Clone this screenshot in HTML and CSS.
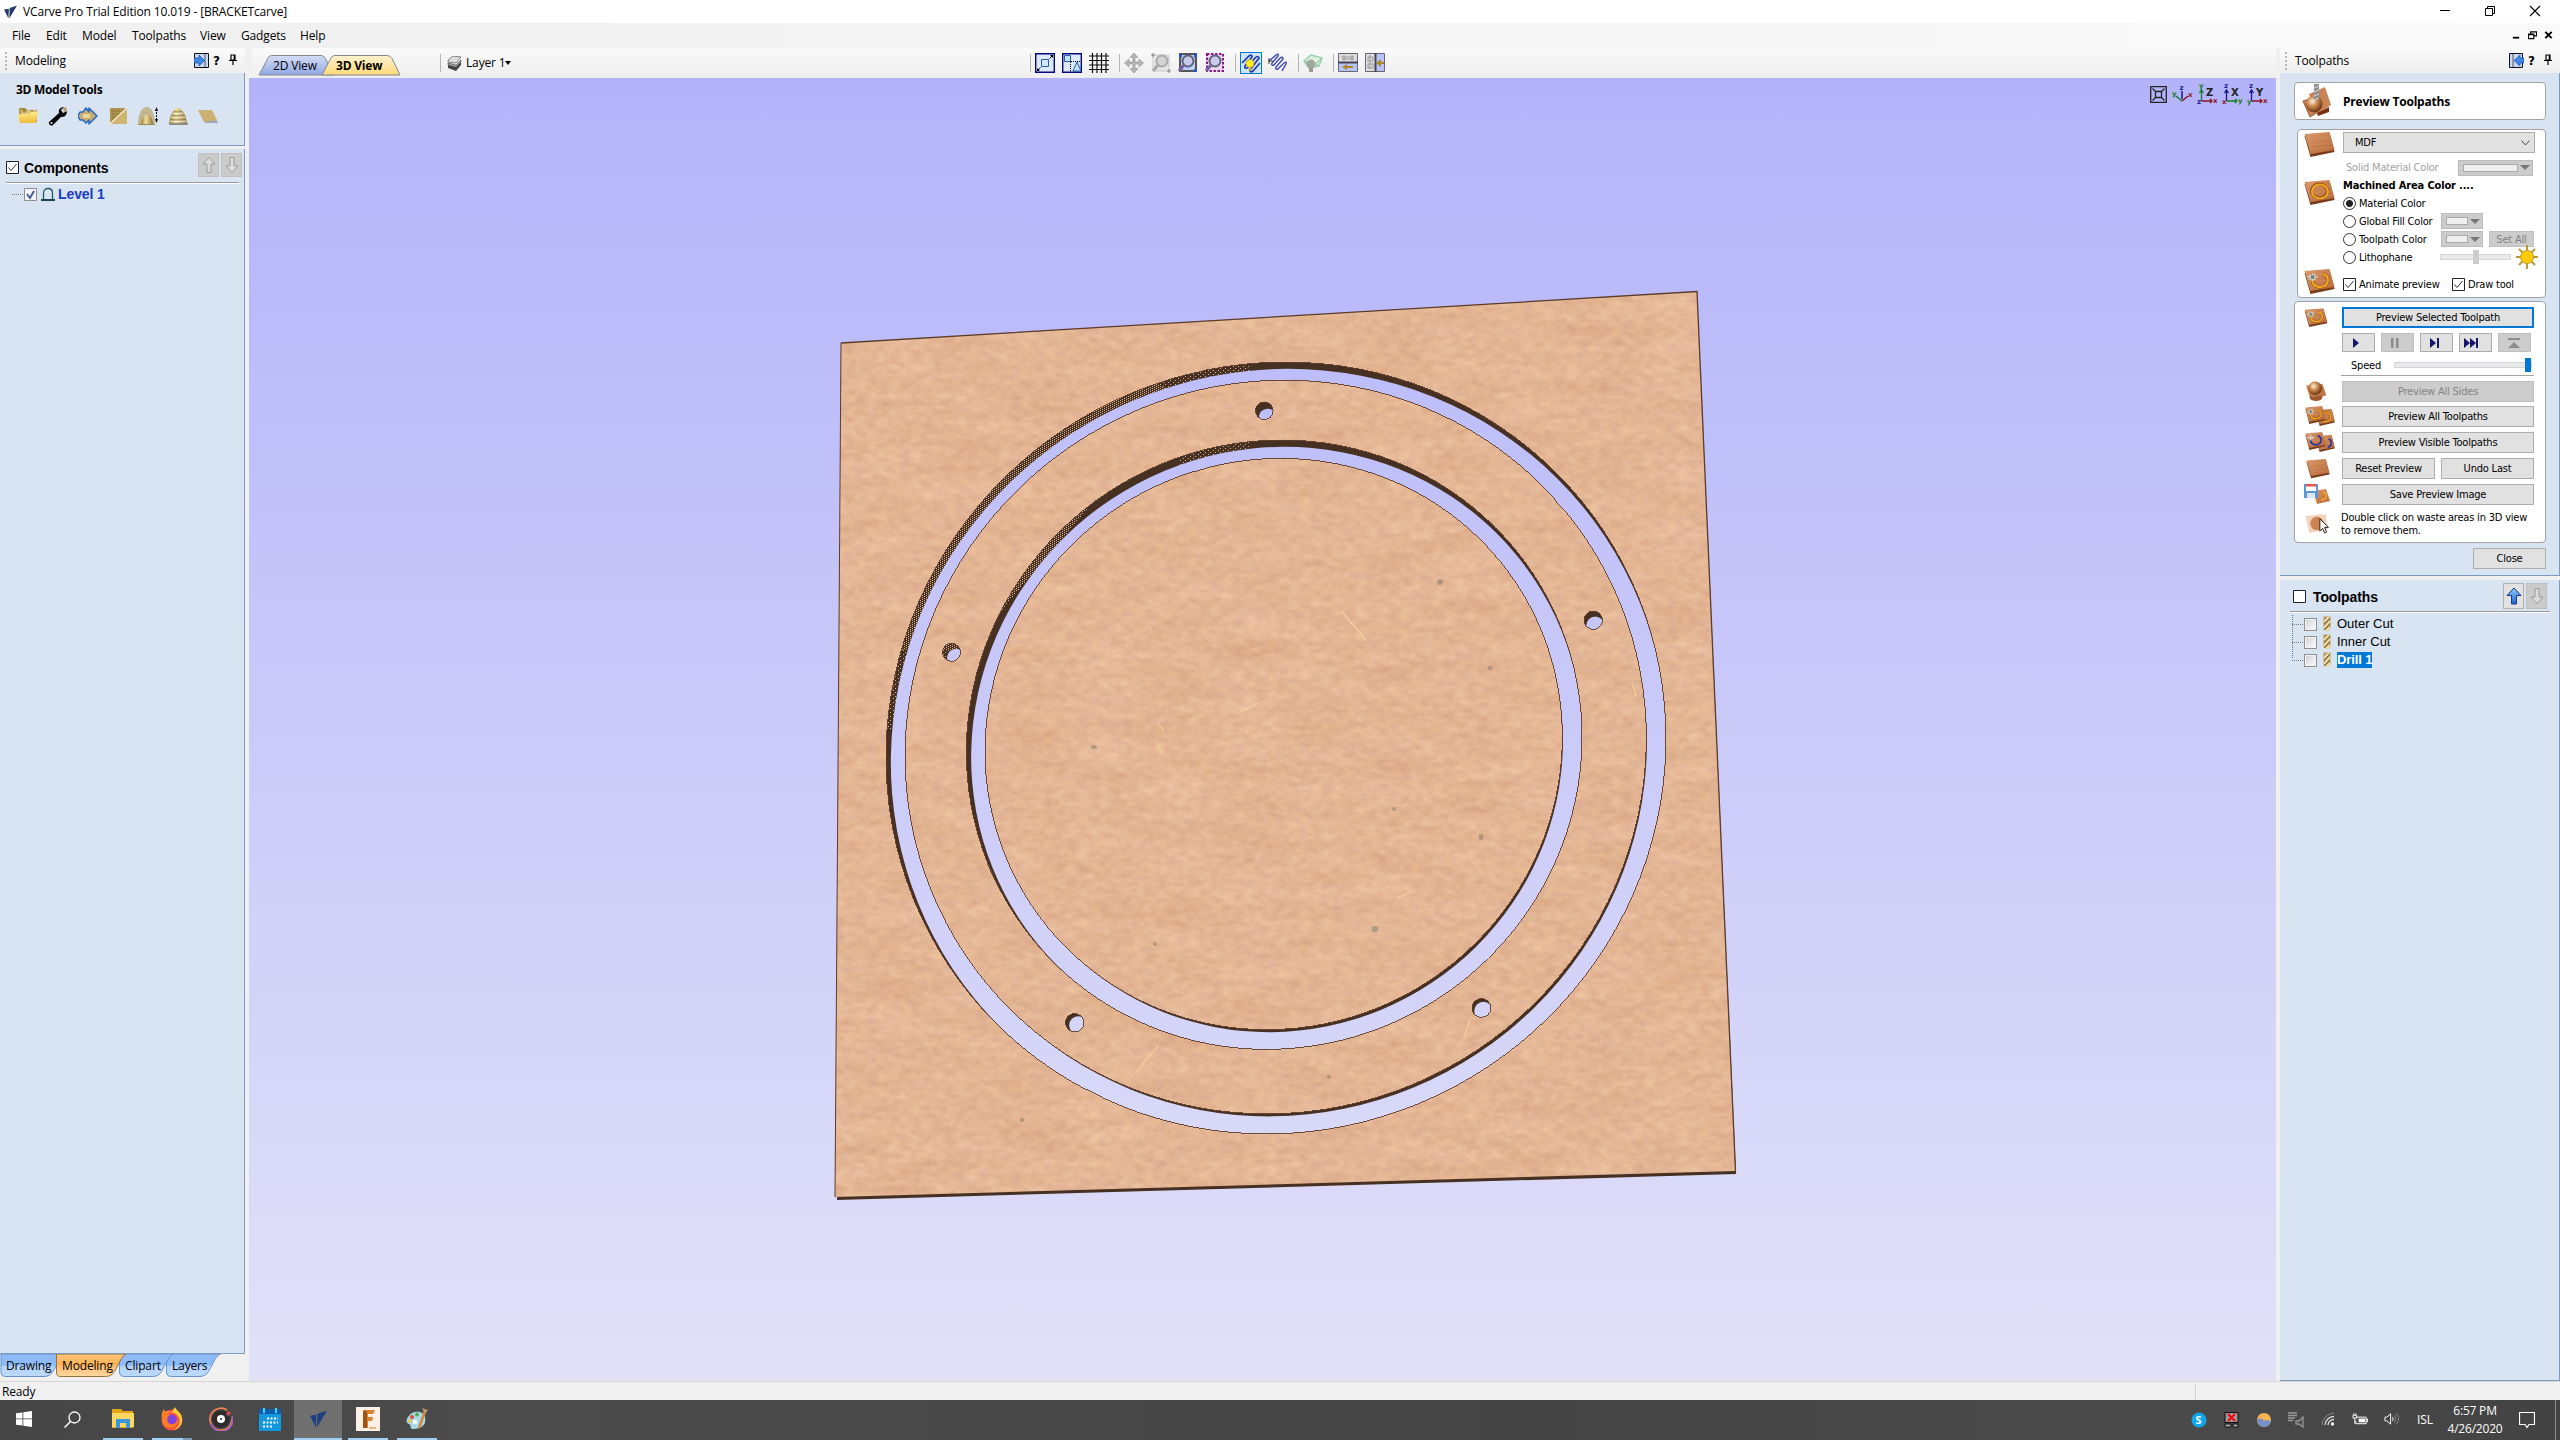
FILE: index.html
```html
<!DOCTYPE html>
<html lang="en">
<head>
<meta charset="utf-8">
<title>VCarve Pro Trial Edition 10.019 - [BRACKETcarve]</title>
<link rel="stylesheet" href="styles.css">
</head>
<body>
<svg class="defs" width="0" height="0">
  <defs>
    <linearGradient id="wood" x1="0" y1="0" x2="1" y2="1"><stop offset="0" stop-color="#dc9a6c"/><stop offset=".5" stop-color="#c8804f"/><stop offset="1" stop-color="#b5683a"/></linearGradient>
    <linearGradient id="brass" x1="0" y1="0" x2="1" y2="0"><stop offset="0" stop-color="#9a7d35"/><stop offset=".4" stop-color="#f0dfa0"/><stop offset="1" stop-color="#937632"/></linearGradient>
    <linearGradient id="folder" x1="0" y1="0" x2="0" y2="1"><stop offset="0" stop-color="#ffe88c"/><stop offset="1" stop-color="#ecbb35"/></linearGradient>
    <radialGradient id="ball" cx=".4" cy=".35" r=".65"><stop offset="0" stop-color="#fff2dc"/><stop offset=".45" stop-color="#cc8a50"/><stop offset="1" stop-color="#6c3413"/></radialGradient>
    <linearGradient id="blue" x1="0" y1="0" x2="0" y2="1"><stop offset="0" stop-color="#8cd1ff"/><stop offset="1" stop-color="#1d61d5"/></linearGradient>
    <symbol id="board" viewBox="0 0 32 26"><path d="M1 4 26 1 31 20 7 25z" fill="#7a3c18"/><path d="M1 2 26 0 31 18 7 22z" fill="url(#wood)"/><path d="M4 7 26 5M6 13 28 11M7 17 29 15" stroke="#e0a47b" stroke-width=".7" opacity=".4"/></symbol>
    <symbol id="ringboard" viewBox="0 0 32 26"><use href="#board" width="32" height="26"/><ellipse cx="16" cy="11" rx="8" ry="7" fill="none" stroke="#8f4d10" stroke-width="3"/><ellipse cx="16.4" cy="11.4" rx="8" ry="7" fill="none" stroke="#f5ac20" stroke-width="1.900"/></symbol>
    <symbol id="cutboard" viewBox="0 0 32 26"><use href="#board" width="32" height="26"/><path d="M19 5c8 2 7 12-2 13-6 0-9-4-8-8" fill="none" stroke="#8f4d10" stroke-width="3"/><path d="M19 5c8 2 7 12-2 13-6 0-9-4-8-8" fill="none" stroke="#f5ac20" stroke-width="2"/><path d="M4 8h10M9 4v8M6 6l6 5M12 5l-6 6" stroke="#cfd8d4" stroke-width="1.5"/><circle cx="9" cy="8" r="2" fill="#6d8480"/></symbol>
    <symbol id="pair" viewBox="0 0 32 22"><g transform="translate(11 3) scale(.66 .72)"><use href="#ringboard" width="32" height="26"/></g><g transform="scale(.7 .75)"><use href="#cutboard" width="32" height="26"/></g></symbol>
    <symbol id="bluepair" viewBox="0 0 32 22"><g transform="translate(11 3) scale(.66 .72)"><use href="#board" width="32" height="26"/></g><path d="M25 7c4 2 4 8-1 9" fill="none" stroke="#2a35a5" stroke-width="1.8"/><g transform="scale(.7 .75)"><use href="#board" width="32" height="26"/><path d="M19 5c8 2 7 12-2 13-6 0-9-4-8-8" fill="none" stroke="#2a35a5" stroke-width="2.6"/><path d="M4 8h10M9 4v8" stroke="#cfd8d4" stroke-width="2"/></g></symbol>
    <symbol id="upgray" viewBox="0 0 16 18"><path d="M8 1.5 14 8h-4v8.500H6V8H2z" fill="#dcdcdc" stroke="#9b9b9b"/></symbol>
    <symbol id="pin" viewBox="0 0 8 11"><path d="M2 1h4v5H2zM0 6.500h8M4 7v4M5.300 1v5" fill="none" stroke="#000" stroke-width="1.200"/></symbol>
    <symbol id="bit" viewBox="0 0 8 16"><path d="M.5.500h7v12l-3.500 3-3.500-3z" fill="#b6975a"/><path d="M1 6 6 1M1 12 7 5M3 15l4-4" stroke="#f2e2b0" stroke-width="1.800"/><path d="M1 8 7 2M1 14 7 8" stroke="#7a6129" stroke-width="1"/></symbol>
    <symbol id="vlogo" viewBox="0 0 16 16"><path d="M0 5 6 4 5.500 16zM7 3 16 0 6.500 16z" fill="currentColor"/></symbol>
  </defs>
</svg>

<header class="titlebar">
  <svg class="applogo" viewBox="0 0 16 16"><use href="#vlogo"/></svg>
  <span class="apptitle">VCarve Pro Trial Edition 10.019 - [BRACKETcarve]</span>
  <div class="wincontrols">
    <svg viewBox="0 0 12 12"><path d="M1 5.500h10" stroke="#000"/></svg>
    <svg viewBox="0 0 12 12"><path d="M1.500 3.500h7v7h-7zM3.500 3.500v-2h7v7h-2" fill="none" stroke="#000"/></svg>
    <svg viewBox="0 0 12 12"><path d="M1 1l10 10M11 1 1 11" stroke="#000" stroke-width="1.100"/></svg>
  </div>
</header>

<nav class="menubar">
  <span class="m-file">File</span><span class="m-edit">Edit</span><span class="m-model">Model</span><span class="m-tool">Toolpaths</span><span class="m-view">View</span><span class="m-gadg">Gadgets</span><span>Help</span>
  <div class="mdicontrols">
    <svg viewBox="0 0 10 10"><path d="M1 8h7" stroke="#000" stroke-width="2"/></svg>
    <svg viewBox="0 0 10 10"><path d="M.5 4h6v5h-6zM3 4V1.500h6.500V6H7M3 1.500h6.500M.5 4.500h6" fill="none" stroke="#000" stroke-width="1.300"/></svg>
    <svg viewBox="0 0 10 10"><path d="M1.500 1.500l7 7M8.500 1.500l-7 7" stroke="#000" stroke-width="2.200"/></svg>
  </div>
</nav>

<main class="workspace">
  <aside class="leftdock">
    <div class="dockhead"><i class="grip"></i><span>Modeling</span>
      <svg class="dockarrow" viewBox="0 0 15 15"><path d="M.5.5h14v14H.5z" fill="#c9d9f5" stroke="#111"/><path d="M11 1v13" stroke="#555"/><path d="M0 5h5V2l5.500 5.500L5 13v-3H0z" fill="#3e86ea" stroke="#174c9b" stroke-width=".7"/></svg>
      <b class="help">?</b><svg class="pin"><use href="#pin"/></svg></div>
    <section class="toolspanel">
      <h2>3D Model Tools</h2>
      <div class="toolicons">
        <svg viewBox="0 0 20 20"><path d="M1 2h6l2 2h10v12H2z" fill="#a88532"/><path d="M2 2l4 5 5-4 3 3 5-4-1 9H4z" fill="#d8c489"/><path d="M0 8h11l2-2h7l-2 11H2z" fill="url(#folder)"/></svg>
        <svg viewBox="0 0 20 20"><path d="M1 16 11 7c-1-4 2-6 5-6l-3 3 2 3 4-2c0 5-3 6-6 6L5 19c-2 2-5-1-4-3z" fill="#0c0c0c"/><path d="M15 2l3-1 1 3-3 2z" fill="#b59a66"/><circle cx="3.500" cy="17" r="1" fill="#eee"/></svg>
        <svg viewBox="0 0 20 20"><path d="M2 6h3l3-4 3 4V2l8 8-8 8v-4l-3 3-3-3H2L0 10z" fill="#c9ac69" stroke="#2869cc" stroke-width="1.600" stroke-linejoin="round"/><path d="M5 8h7v4H5z" fill="#ead79d"/></svg>
        <svg viewBox="0 0 20 20"><path d="M2 2h17v16H2z" fill="#b79b58"/><path d="M2 5h17M2 8h17M2 11h17M2 14h17M5 2v16M8 2v16M11 2v16M14 2v16" stroke="#8c7235" stroke-width=".7"/><path d="M3 18 19 3v15z" fill="#cdb471"/><path d="M2 18 19 2" stroke="#f8efd0" stroke-width="1.500"/></svg>
        <svg viewBox="0 0 20 20"><path d="M0 19C0 5 5 1 8.500 1s8.500 4 8.500 18z" fill="#c2b791"/><path d="M3 19c0-8 3-10 6-10s6 3 6 10z" fill="url(#brass)"/><path d="M0 18.500h17" stroke="#998a5c"/><path d="M18.500 3v12" stroke="#111" stroke-dasharray="2 1"/><path d="M17 5l1.500-4L20 5zM17 13l1.500 4 1.500-4z"/></svg>
        <svg viewBox="0 0 20 20"><path d="M1 18C2 6 7 2 10 2s8 5 9 16z" fill="url(#brass)"/><path d="M5 6h10M3 10h14M2 14h16" stroke="#81784f" stroke-width="1.200"/><path d="M5 7.200h10M3 11.200h14M2 15.200h16" stroke="#f5efd8"/><path d="M1 18h19" stroke="#8f8e84" stroke-width="2"/></svg>
        <svg viewBox="0 0 20 20"><path d="M1 6h13l6 11H7z" fill="#9fa7ad"/><path d="M0 4h14l5 10-13 2z" fill="#cbb274"/></svg>
      </div>
    </section>
    <section class="treepanel">
      <div class="treehead"><svg class="check" viewBox="0 0 13 13"><path d="M.5.5h12v12H.5z" fill="#fff" stroke="#222"/><path d="M2.500 6.500 5 9.500 10.500 3" fill="none" stroke="#333"/></svg><h3>Components</h3>
        <span class="arrowbtn off"><svg><use href="#upgray"/></svg></span><span class="arrowbtn off down"><svg><use href="#upgray"/></svg></span></div>
      <div class="treeline"><i class="stub"></i><svg class="check" viewBox="0 0 13 13"><path d="M.5.5h12v12H.5z" fill="#f4f4f4" stroke="#8e8f8f"/><path d="M3 6l3 4 4-7" fill="none" stroke="#4a5f97" stroke-width="2"/></svg>
        <svg class="levelicon" viewBox="0 0 14 14"><path d="M2.500 12V6c0-6 9-6 9 0v6" fill="none" stroke="#235765" stroke-width="1.300"/><path d="M0 13h14" stroke="#174350" stroke-width="2"/></svg><b>Level 1</b></div>
    </section>
    <div class="docktabs">
      <svg viewBox="0 0 222 24" width="222" height="24">
        <defs><linearGradient id="tb" x1="0" y1="0" x2="0" y2="1"><stop offset="0" stop-color="#8fbcf8"/><stop offset=".5" stop-color="#8abaf8"/><stop offset=".55" stop-color="#b4d3fb"/><stop offset="1" stop-color="#bcdafd"/></linearGradient>
        <linearGradient id="to" x1="0" y1="0" x2="0" y2="1"><stop offset="0" stop-color="#fbc57c"/><stop offset=".45" stop-color="#fdb255"/><stop offset=".55" stop-color="#fdbd73"/><stop offset="1" stop-color="#ffd9a0"/></linearGradient></defs>
        <g stroke="#6792cc"><path d="M166.500 0v18q0 4.500 5 4.500h28q6 0 9-5l7-13q2-4 5-4.500z" fill="url(#tb)"/><path d="M119.500 0v18q0 4.500 5 4.500h28q6 0 9-5l7-13q2-4 5-4.500z" fill="url(#tb)"/><path d="M1 0v18q0 4.500 5 4.500h38q6 0 9-5l7-13V0z" fill="url(#tb)"/></g>
        <path d="M56.500 0v18q0 4.500 4 4.500h45q6 0 9-5l7-13q2-4 5-4.500z" fill="url(#to)" stroke="#96723c"/>
      </svg>
      <div class="tablabels"><span>Drawing</span><span>Modeling</span><span>Clipart</span><span>Layers</span></div>
    </div>
  </aside>

  <section class="center">
    <div class="toolbar">
      <div class="viewtabs">
        <svg viewBox="0 0 144 21" width="144" height="21"><defs><linearGradient id="t2" x1="0" y1="0" x2="0" y2="1"><stop offset="0" stop-color="#d5ddf6"/><stop offset="1" stop-color="#8fa8e4"/></linearGradient><linearGradient id="t3" x1="0" y1="0" x2="0" y2="1"><stop offset="0" stop-color="#fff3d1"/><stop offset="1" stop-color="#fdd877"/></linearGradient></defs>
        <path d="M1 20 10 3q1-2.500 4-2.500h49q3 0 4 2.500l9 17z" fill="url(#t2)" stroke="#85888d"/><path d="M64 20 73 3q1-2.500 4-2.500h52q3 0 5 3l8 16.500z" fill="url(#t3)" stroke="#85888d"/></svg>
        <div class="viewlabels"><span>2D View</span><b>3D View</b></div>
      </div>
      <i class="sep s0"></i>
      <svg class="layericon" viewBox="0 0 15 15"><path d="M1 9 9 11l5-5v3l-5 6-8-3z" fill="#444"/><path d="M1 7 9 9l5-5v2l-5 5-8-2z" fill="#aaa" stroke="#333" stroke-width=".6"/><path d="M1 4 6 0l8 1-5 6-8-1z" fill="#ddd" stroke="#555" stroke-width=".7"/></svg>
      <span class="layername">Layer 1</span><i class="caret"></i>
      <div class="viewtools">
        <i class="sep"></i>
        <svg viewBox="0 0 20 20"><path d="M.7.700h18.600v18.600H.7z" fill="#dde9f7" stroke="#06067d" stroke-width="1.400"/><path d="M6.500 6.500h7v7h-7z" fill="#d3e9fb" stroke="#2060a8"/><path d="M2 18l3.500-3.500M14.500 5.500 18 2" stroke="#000"/><path d="M2 15v3h3zM15 2h3v3z"/></svg>
        <svg viewBox="0 0 20 20"><path d="M.7.700h18.600v18.600H.7z" fill="#dde9f7" stroke="#06067d" stroke-width="1.400"/><path d="M2.500 2.500h6v6h-6z" fill="#c4e4fb" stroke="#2060a8"/><path d="M11 18l4-9 4 9z" fill="#c4e4fb" stroke="#2060a8"/><path d="M8.500 18V8.500H19" fill="none" stroke="#000" stroke-dasharray="1 1"/></svg>
        <svg viewBox="0 0 20 20"><path d="M3.500 0v20M8 0v20M12.500 0v20M17 0v20M0 3h20M0 7.500h20M0 12h20M0 16.500h20" stroke="#111" stroke-width="1.200"/></svg>
        <i class="sep"></i>
        <svg viewBox="0 0 20 20"><path d="M10 0l4 4.500h-3V9h4V6l4.500 4-4.500 4v-3h-4v4.500h3L10 20l-4-4.500h3V11H5v3L.5 10 5 6v3h4V4.500H6z" fill="#b5b5b5" stroke="#999" stroke-width=".7"/></svg>
        <svg viewBox="0 0 20 20"><path d="M2 2h16v16H2z" fill="#e5e5e5" stroke="#ccc"/><circle cx="11" cy="8" r="5.500" fill="#d4d4d4" stroke="#aaa" stroke-width="2"/><path d="M7 12l-5 6" stroke="#aaa" stroke-width="3"/><path d="M0 2h4M2 0v4M16 18h4M18 16v4" stroke="#888"/></svg>
        <svg viewBox="0 0 20 20"><path d="M2 1h16v17H2z" fill="#b8d0fb" stroke="#555" stroke-width="2"/><circle cx="10" cy="8" r="5.500" fill="#c9caec" stroke="#62627c" stroke-width="2"/><path d="M6 12l-5 6" stroke="#7860a3" stroke-width="3"/><path d="M1 1h3v3H1zM16 1h3v3h-3zM16 16h3v3h-3z" fill="#2457c7"/></svg>
        <svg viewBox="0 0 20 20"><path d="M2 1h16v17H2z" fill="#ead9ed" stroke="#8b1689" stroke-width="2" stroke-dasharray="2.500 1.500"/><circle cx="10" cy="8" r="5.500" fill="#c9caec" stroke="#62627c" stroke-width="2"/><path d="M6 12l-5 6" stroke="#7860a3" stroke-width="3"/></svg>
        <i class="sep"></i>
        <svg class="active" viewBox="0 0 20 20"><path d="M1 10 8 3q3-2 3 1L4 13q-1 3 2 2L14 5q3-3 4 0L9 17q0 3 3 1l7-8" fill="none" stroke="#2438ba" stroke-width="1.700"/><circle cx="9" cy="10.500" r="4" fill="#ffed22" stroke="#a89d33" stroke-width=".8"/><path d="M7.500 14.500h3v3h-3z" fill="#c7af3a"/></svg>
        <svg viewBox="0 0 20 20"><path d="M1 8 8 2q3-2 2 1L4 10q-1 3 2 2l6-7q3-2 3 1L8 14q-1 3 2 2l6-6q3-2 2 1l-4 7" fill="none" stroke="#3644b5" stroke-width="1.400"/><path d="M0 8h5M1 5v6" stroke="#444"/></svg>
        <i class="sep"></i>
        <svg viewBox="0 0 20 20"><path d="M1 8 8 2l11 3-3 8-10 2zM1 8l11 3 7-6M12 11l4 2" fill="#d9eee0" stroke="#9bd0aa" stroke-width="1.500"/><circle cx="8" cy="11" r="4.500" fill="#a3aa9c"/><path d="M6 14h4v5H6z" fill="#9b9b8e"/></svg>
        <i class="sep"></i>
        <svg viewBox="0 0 20 20"><path d="M.5.500h19v18H.5z" fill="#ddd" stroke="#667"/><path d="M1 10h18v8H1z" fill="#b5c5fa"/><path d="M0 9.500h20" stroke="#445" stroke-width="2"/><path d="M3 4h13M4 6h12M6 2v6M14 2v6" stroke="#999"/><path d="M4 14l5-3v2h6v2H9v2z" fill="#b38523"/></svg>
        <svg viewBox="0 0 20 20"><path d="M.5.500h19v18H.5z" fill="#ddd" stroke="#667"/><path d="M11 1h8v17h-8z" fill="#b5c5fa"/><path d="M10.500 0v19" stroke="#445" stroke-width="2"/><path d="M3 4h5v4H3zM3 11h5v4H3zM5 2v14" fill="none" stroke="#999"/><path d="M11 10l5-4v3h3v2h-3v3z" fill="#b38523"/></svg>
      </div>
    </div>
    <div class="viewport">
      <svg class="scene" viewBox="249 78 2027 1303" width="2027" height="1303">
        <defs>
          <filter id="mdf" x="0" y="0" width="1" height="1" color-interpolation-filters="sRGB">
            <feTurbulence type="fractalNoise" baseFrequency="0.014 0.05" numOctaves="2" seed="8" result="a"/>
            <feColorMatrix in="a" type="matrix" values=".04 .03 0 0 .856  .06 .05 0 0 .656  .05 .08 0 0 .517  0 0 0 0 1" result="base"/>
            <feTurbulence type="fractalNoise" baseFrequency="0.09 0.15" numOctaves="3" seed="21" result="b"/>
            <feColorMatrix in="b" type="matrix" values=".09 0 0 0 .455  .12 .03 0 0 .425  .08 .07 0 0 .425  0 0 0 0 1" result="fine"/>
            <feComposite in="base" in2="fine" operator="arithmetic" k1="0" k2="1" k3="1" k4="-.5"/>
          </filter>
          <pattern id="stipple" width="4" height="4" patternUnits="userSpaceOnUse"><path d="M0 0h1v1H0zM2 1h1v1H2zM0 2h1v1H0zM2 3h1v1H2z" fill="#d9b08e"/></pattern>
          <pattern id="stipplethin" width="5" height="4" patternUnits="userSpaceOnUse"><path d="M0 0h1v1H0zM3 2h1v1H3z" fill="#d9b08e"/></pattern>
          <mask id="topface" maskUnits="userSpaceOnUse" x="820" y="280" width="930" height="930">
            <path d="M841 343 1697 291.500 1735.500 1171 835 1197z" fill="#fff"/>
            <ellipse rx="393.100" ry="382.800" transform="translate(1276 748) rotate(-33.500)" fill="#000"/>
            <ellipse rx="373.600" ry="363.900" transform="translate(1275.700 747) rotate(-33.500)" fill="#fff"/>
            <ellipse rx="310.300" ry="302.200" transform="translate(1274.200 744.700) rotate(-33.500)" fill="#000"/>
            <ellipse rx="291" ry="283.300" transform="translate(1273.700 744) rotate(-33.500)" fill="#fff"/>
            <g fill="#000"><circle cx="1264.300" cy="410.800" r="9"/><circle cx="951.500" cy="652.300" r="9.200"/><circle cx="1593.300" cy="620.300" r="9.300"/><circle cx="1074.700" cy="1022.700" r="9.300"/><circle cx="1481.400" cy="1008" r="9.600"/></g>
          </mask>
          <mask id="lowface" maskUnits="userSpaceOnUse" x="820" y="280" width="930" height="930">
            <path d="M841 343 1697 291.500 1736 1174 837 1200z" fill="#fff"/>
            <ellipse rx="391.300" ry="381" transform="translate(1279 753) rotate(-33.500)" fill="#000"/>
            <ellipse rx="371.800" ry="362.100" transform="translate(1278 751.300) rotate(-33.500)" fill="#fff"/>
            <ellipse rx="308.500" ry="300.400" transform="translate(1277.200 749.700) rotate(-33.500)" fill="#000"/>
            <ellipse rx="289.200" ry="281.500" transform="translate(1276 748.300) rotate(-33.500)" fill="#fff"/>
            <g fill="#000"><circle cx="1267.600" cy="417.500" r="8.800"/><circle cx="956" cy="657.800" r="9"/><circle cx="1595.300" cy="625.500" r="9"/><circle cx="1078.200" cy="1025.200" r="9"/><circle cx="1483.400" cy="1011" r="9.200"/></g>
          </mask>
        </defs>
        <g mask="url(#lowface)" shape-rendering="crispEdges">
          <path d="M820 280h930v930H820z" fill="#453022"/>
          <path d="M880 650 920 560 1060 400 1140 370 1180 400 1010 600 975 650z" fill="url(#stipple)"/>
          <path d="M1140 350h110v130h-70V400l-40-30zM880 650h95l-20 80h-75z" fill="url(#stipplethin)"/>
        </g>
        <g mask="url(#topface)">
          <rect x="820" y="280" width="930" height="930" fill="#e2b493" filter="url(#mdf)"/>
          <g fill="#8b7f6c" opacity=".55"><ellipse cx="1440" cy="582" rx="3" ry="3"/><ellipse cx="1375" cy="929" rx="3.500" ry="3"/><ellipse cx="1490" cy="668" rx="2.500" ry="2"/><ellipse cx="1481" cy="837" rx="2.500" ry="3"/><ellipse cx="1094" cy="747" rx="3" ry="2"/><ellipse cx="1394" cy="809" rx="2" ry="2"/><ellipse cx="1155" cy="944" rx="2" ry="2"/><ellipse cx="1022" cy="1120" rx="2" ry="2"/><ellipse cx="1329" cy="1077" rx="2" ry="2"/></g>
          <g fill="none" stroke="#f4cf9f" stroke-width="2" opacity=".7" stroke-linecap="round"><path d="M1342 612 1366 640M1158 1046 1136 1072M1632 683l4 12M1398 898l14-7M1470 1020l-6 18M1157 722l6 8M1157 744l5 9M1240 712l18-9"/></g>
        </g>
        <g fill="none" stroke="#5d3c29">
          <path d="M841 343 1697 291.500 1735.500 1171" stroke-width="1.300"/><path d="M841 343 835 1197" stroke-width="1"/>
          <g stroke-width=".9" shape-rendering="crispEdges">
          <ellipse rx="393.100" ry="382.800" transform="translate(1276 748) rotate(-33.500)"/>
          <ellipse rx="373.600" ry="363.900" transform="translate(1275.700 747) rotate(-33.500)"/>
          <ellipse rx="310.300" ry="302.200" transform="translate(1274.200 744.700) rotate(-33.500)"/>
          <ellipse rx="291" ry="283.300" transform="translate(1273.700 744) rotate(-33.500)"/>
          <circle cx="1264.300" cy="410.800" r="8.800"/><circle cx="951.500" cy="652.300" r="9"/><circle cx="1593.300" cy="620.300" r="9.200"/><circle cx="1074.700" cy="1022.700" r="9.200"/><circle cx="1481.400" cy="1008" r="9.400"/></g>
        </g>
      </svg>
      <div class="axes">
        <svg viewBox="0 0 17 17" width="17" height="17"><path d="M.7.700h15.600v15.600H.7zM5.500 5.500h6v6h-6zM2.500 2.500l3 3M14.500 2.500l-3 3M2.500 14.500l3-3M14.500 14.500l-3-3" fill="none" stroke="#222" stroke-width="1.300"/></svg>
        <svg viewBox="0 0 20 20" width="20" height="20"><path d="M10 15V7" stroke="#16168c" stroke-width="1.500"/><path d="M10 17 4 12" stroke="#187b26" stroke-width="1.500"/><path d="M10 17l6-5" stroke="#8c1620" stroke-width="1.500"/><text x="7.500" y="6" fill="#16168c">z</text><text x="0" y="12" fill="#187b26">y</text><text x="16" y="13" fill="#8c1620">x</text></svg>
        <svg viewBox="0 0 20 20" width="20" height="20"><path d="M4.500 17V6M2.500 9l2-3 2 3" fill="none" stroke="#187b26" stroke-width="1.300"/><path d="M4.500 17H15M13 15l2 2-2 2" fill="none" stroke="#8c1620" stroke-width="1.300"/><text x="2" y="4" fill="#187b26">y</text><text x="0" y="20" fill="#16168c">z</text><text x="16" y="19" fill="#8c1620">x</text><text class="big" x="9" y="12">Z</text></svg>
        <svg viewBox="0 0 20 20" width="20" height="20"><path d="M4.500 17V6M2.500 9l2-3 2 3" fill="none" stroke="#16168c" stroke-width="1.300"/><path d="M4.500 17H15M13 15l2 2-2 2" fill="none" stroke="#187b26" stroke-width="1.300"/><text x="2" y="4" fill="#16168c">z</text><text x="0" y="20" fill="#8c1620">x</text><text x="16" y="19" fill="#187b26">y</text><text class="big" x="9" y="12">X</text></svg>
        <svg viewBox="0 0 20 20" width="20" height="20"><path d="M4.500 17V6M2.500 9l2-3 2 3" fill="none" stroke="#16168c" stroke-width="1.300"/><path d="M4.500 17H15M13 15l2 2-2 2" fill="none" stroke="#8c1620" stroke-width="1.300"/><text x="2" y="4" fill="#16168c">z</text><text x="0" y="20" fill="#187b26">y</text><text x="16" y="19" fill="#8c1620">x</text><text class="big" x="9" y="12">Y</text></svg>
      </div>
    </div>
  </section>

  <aside class="rightdock">
    <div class="dockhead"><i class="grip"></i><span>Toolpaths</span>
      <svg class="dockarrow" viewBox="0 0 15 15"><path d="M.5.500h13v14H.5z" fill="#c9d9f5" stroke="#111"/><path d="M4 1v13" stroke="#555"/><path d="M15 5h-4V2L5 7.500 11 13v-3h4z" fill="#3e86ea" stroke="#174c9b" stroke-width=".7"/></svg>
      <b class="help">?</b><svg class="pin"><use href="#pin"/></svg></div>
    <section class="previewpanel">
      <div class="group heading">
        <svg viewBox="0 0 30 34" width="30" height="34"><path d="M8 10 24 3l6 18-14 9z" fill="#c98455"/><path d="M16 29l12-6v5l-11 4z" fill="#7b3214"/><path d="M2 17l10-3 5 14-8 5z" fill="#c98455" stroke="#a05a2e"/><circle cx="13" cy="20" r="8.500" fill="url(#ball)"/><path d="M13 0h5v16h-5z" fill="#8d9093"/><path d="M13 4l5-2M13 8l5-2M13 12l5-2M13 16l5-2" stroke="#dadada"/></svg>
        <b>Preview Toolpaths</b>
      </div>
      <div class="group material">
        <div class="iconcol">
          <svg class="w i1"><use href="#board"/></svg><svg class="w i2"><use href="#ringboard"/></svg><svg class="w i3"><use href="#cutboard"/></svg>
        </div>
        <div class="fields">
          <div class="select"><span>MDF</span><svg viewBox="0 0 9 6" width="9" height="6"><path d="M.5.500l4 4.500 4-4.500" fill="none" stroke="#444"/></svg></div>
          <div class="solid"><span>Solid Material Color</span><span class="swatch wide"><i></i><em></em></span></div>
          <b class="areatitle">Machined Area Color ....</b>
          <div class="radio"><i class="on"></i><span>Material Color</span></div>
          <div class="radio"><i></i><span class="l1">Global Fill Color</span><span class="swatch"><i></i><em></em></span></div>
          <div class="radio"><i></i><span class="l1">Toolpath Color</span><span class="swatch"><i></i><em></em></span><button class="setall">Set All</button></div>
          <div class="radio"><i></i><span class="l2">Lithophane</span><span class="slider dim"><em></em></span><svg class="sun" viewBox="0 0 22 24" width="22" height="24"><path d="M11 0v24M0 12h22M3 4l16 16M19 4 3 20" stroke="#b99836" stroke-width="2"/><circle cx="11" cy="12" r="6.500" fill="#ffcb05" stroke="#c59a1f"/></svg></div>
          <div class="checks"><svg class="check" viewBox="0 0 13 13"><path d="M.5.500h12v12H.5z" fill="#fff" stroke="#222"/><path d="M2.500 6.500 5 9.500 10.500 3" fill="none" stroke="#333"/></svg><span class="anim">Animate preview</span><svg class="check" viewBox="0 0 13 13"><path d="M.5.500h12v12H.5z" fill="#fff" stroke="#222"/><path d="M2.500 6.500 5 9.500 10.500 3" fill="none" stroke="#333"/></svg><span>Draw tool</span></div>
        </div>
      </div>
      <div class="group actions">
        <svg class="n"><use href="#cutboard"/></svg><button class="focus">Preview Selected Toolpath</button>
        <span></span><div class="media">
          <button><svg viewBox="0 0 16 12"><path d="M3 1l6 5-6 5z"/></svg></button><button class="off"><svg viewBox="0 0 16 12"><path d="M2 1h2.500v10H2zM7 1h2.500v10H7z" fill="#8c8c8c"/></svg></button><button><svg viewBox="0 0 16 12"><path d="M2 1l6 5-6 5zM9 1h2v10H9z"/></svg></button><button><svg viewBox="0 0 16 12"><path d="M0 1l6 5-6 5zM6 1l6 5-6 5zM12 1h2v10h-2z"/></svg></button><button class="off"><svg viewBox="0 0 16 12"><path d="M2 1h12v2H2zM8 5l6 6H2z" fill="#8c8c8c"/></svg></button></div>
        <span></span><div class="speed"><span>Speed</span><span class="slider"><em></em></span></div>
        <svg class="n" viewBox="0 0 24 22"><path d="M1 5 19 3l4 13L6 20z" fill="url(#wood)"/><ellipse cx="12" cy="18" rx="7" ry="4" fill="#9d5830"/><path d="M2 7l18-1 3 9-16 3z" fill="#bf7848"/><circle cx="11" cy="8" r="7.500" fill="url(#ball)"/></svg><button class="off">Preview All Sides</button>
        <svg class="p"><use href="#pair"/></svg><button>Preview All Toolpaths</button>
        <svg class="p"><use href="#bluepair"/></svg><button>Preview Visible Toolpaths</button>
        <svg class="n plain"><use href="#board"/></svg><div class="split"><button>Reset Preview</button><button>Undo Last</button></div>
        <svg class="n save" viewBox="0 0 26 21"><path d="M9 7l13-2 4 12-13 3z" fill="url(#wood)"/><path d="M19 8c5 2 4 8-2 8" fill="none" stroke="#f2a825" stroke-width="1.500"/><path d="M0 0h14v14H0z" fill="#5d97d8"/><path d="M2 0h10v7H2z" fill="#fff"/><path d="M2 0h10v2.500H2z" fill="#e35b4f"/><path d="M3 9h8v5H3z" fill="#dce7f5"/></svg><button>Save Preview Image</button>
        <svg class="n hand" viewBox="0 0 26 22"><path d="M1 2 22 0l3 16L5 20z" fill="#f0d3bd"/><circle cx="13" cy="10" r="7" fill="#cf8350"/><path d="M16 5v13l3-3 2 5 2-1-2-5h4z" fill="#fff" stroke="#222"/></svg><p>Double click on waste areas in 3D view<br>to remove them.</p>
      </div>
      <button class="close">Close</button>
    </section>
    <section class="pathspanel">
      <div class="treehead"><svg class="check" viewBox="0 0 13 13"><path d="M.5.500h12v12H.5z" fill="#fff" stroke="#222"/></svg><h3>Toolpaths</h3>
        <span class="arrowbtn"><svg viewBox="0 0 16 18"><path d="M8 1 15 8.500h-4.500V17h-5V8.500H1z" fill="url(#blue)" stroke="#173a7c"/></svg></span><span class="arrowbtn off down"><svg><use href="#upgray"/></svg></span></div>
      <div class="paths">
        <div class="treeline"><i class="stub"></i><i class="box"></i><svg class="bit"><use href="#bit"/></svg><span>Outer Cut</span></div>
        <div class="treeline"><i class="stub"></i><i class="box"></i><svg class="bit"><use href="#bit"/></svg><span>Inner Cut</span></div>
        <div class="treeline"><i class="stub"></i><i class="box"></i><svg class="bit"><use href="#bit"/></svg><b class="sel">Drill 1</b></div>
      </div>
    </section>
  </aside>
</main>

<div class="statusbar"><span>Ready</span><i></i></div>

<footer class="taskbar">
  <div class="tb start"><svg viewBox="0 0 16 16" width="16" height="16"><path d="M0 2.300 6.500 1.400v6.100H0zM7.300 1.300 16 0v7.500H7.300zM0 8.300h6.500v6.300L0 13.700zM7.300 8.300H16V16l-8.700-1.300z" fill="#fff"/></svg></div>
  <div class="tb start"><svg viewBox="0 0 17 17" width="17" height="17"><circle cx="10.500" cy="6.500" r="5.500" fill="none" stroke="#fff" stroke-width="1.300"/><path d="M6.500 10.500 .5 16.500" stroke="#fff" stroke-width="1.500"/></svg></div>
  <div class="tb open"><svg viewBox="0 0 22 20" width="22" height="20"><path d="M0 1q0-1 1-1h8l2 2h10v17H0z" fill="#e5a512"/><path d="M0 4h22v14H0z" fill="#ffd862"/><path d="M4 10h14v9h-4v-5H8v5H4z" fill="#3a96df"/></svg></div>
  <div class="tb open multi"><svg viewBox="0 0 24 24" width="24" height="24"><circle cx="12" cy="13" r="10.500" fill="#ff4d45"/><path d="M2 8C4 5 8 3 11 6l4-6c2 5 7 5 7 13 0 7-6 10-10 10 6-1 9-6 7-12-3-7-10-8-17-3z" fill="#ffd233"/><path d="M2 12C1 6 3 3 4 2l2 4c3 0 3 3 6 3-3 1-5 4-2 7 4 2 7-1 6-4 4 4 0 9-6 9C5 21 2 17 2 12z" fill="#ff7d22"/><circle cx="12" cy="12.500" r="4.800" fill="#8143dc"/></svg></div>
  <div class="tb"><svg viewBox="0 0 24 24" width="24" height="24"><circle cx="12" cy="12" r="8.800" fill="#2c2c2e"/><path d="M18 3A11 11 0 1 0 23 12" fill="none" stroke="#f08150" stroke-width="1.800"/><path d="M2 17a11 11 0 0 0 21-8" fill="none" stroke="#a05dba" stroke-width="1.800"/><path d="M18 8l3-3" stroke="#d64e50" stroke-width="3"/><circle cx="12" cy="12" r="4" fill="#fff"/><circle cx="12" cy="12" r="1" fill="#222"/></svg></div>
  <div class="tb"><svg viewBox="0 0 22 23" width="22" height="23"><path d="M0 1h22v22H0z" fill="#1398df"/><path d="M0 1h22v5H0z" fill="#0c5fae"/><path d="M4 0h2v5H4zM16 0h2v5h-2z" fill="#4bd2ff"/><path d="M8 10.500h11M4 14.500h15M4 18.500h10" stroke="#fff" stroke-width="2" stroke-dasharray="2 1.500"/></svg></div>
  <div class="tb open current"><svg class="vc" viewBox="0 0 16 16" width="17" height="20"><use href="#vlogo"/></svg></div>
  <div class="tb open"><svg viewBox="0 0 24 24" width="24" height="24"><path d="M0 0h24v24H0z" fill="#fcefe5"/><path d="M8 3h11l-2 4h-5v3h5l-1 4h-4v7H7V5z" fill="#d8822f"/><path d="M8 3l3 2v16H7V5z" fill="#9c5314"/><path d="M13 20h7v2h-7z" fill="#eeb487"/></svg></div>
  <div class="tb open"><svg viewBox="0 0 24 22" width="24" height="22"><path d="M3 9C7 2 18 2 20 9c2 8-4 12-12 12-4 0-1-4-4-5s-3-4-1-7z" fill="#a8d8ea"/><circle cx="7" cy="9" r="2" fill="#df4b3d"/><circle cx="12" cy="6.500" r="2" fill="#55ad47"/><circle cx="5" cy="13" r="1.800" fill="#f0c634"/><circle cx="10" cy="14" r="2.200" fill="#fff"/><path d="M14 20 20 3" stroke="#d98a37" stroke-width="2.500"/><path d="M17 0l6 2-3 4z" fill="#b59870"/></svg></div>
  <div class="tray">
    <svg viewBox="0 0 16 16" width="16" height="16"><circle cx="8" cy="8" r="7.500" fill="#10a5ea"/><text class="skype" x="4.600" y="12">S</text></svg>
    <svg viewBox="0 0 16 16" width="16" height="16"><path d="M1 .5h13v10H1z" fill="#999" stroke="#111"/><path d="M4 2l7 7M11 2 4 9" stroke="#f00" stroke-width="1.800"/><path d="M1 12h6v3H1zM9 12h5v3H9z" fill="#aaa" stroke="#111"/></svg>
    <svg viewBox="0 0 16 16" width="16" height="16"><circle cx="8" cy="8" r="7" fill="#f8b451"/><path d="M1 8c3-3 6-1 7 1 3-2 5 0 7 0-1 4-4 6-7 6s-6-2-7-7z" fill="#7691c9"/></svg>
    <svg viewBox="0 0 16 16" width="16" height="16"><path d="M0 1h9M0 3.500h9M0 6h7M0 8.500h5" stroke="#999" stroke-width="1.500"/><path d="M8 9h3l4-4v10l-4-3H8z" fill="none" stroke="#999" stroke-width="1.300"/></svg>
    <svg viewBox="0 0 14 14" width="14" height="14"><g fill="none"><path d="M1 13A13 13 0 0 1 13 1" stroke="#888"/><path d="M4 13a9 9 0 0 1 9-8.500M7 13a6 6 0 0 1 6-5.500" stroke="#ddd" stroke-width="1.300"/></g><circle cx="11.500" cy="12" r="1.700" fill="#fff"/></svg>
    <svg viewBox="0 0 17 14" width="17" height="14"><path d="M5 5h10v7H4v-3M15 7h1.500v3H15" fill="none" stroke="#fff"/><path d="M7 6.500h7v4H7z" fill="#fff"/><path d="M1 3v3h4V3zM2 3V1M4 3V1M3 6v6" fill="none" stroke="#fff"/></svg>
    <svg viewBox="0 0 17 14" width="17" height="14"><path d="M1 5h2l4-3.500v11L3 9H1z" fill="none" stroke="#fff"/><path d="M9 5q1.500 2 0 4" fill="none" stroke="#fff"/><path d="M11 3q3 4 0 8M13 1q5 6 0 12" fill="none" stroke="#888"/></svg>
  </div>
  <span class="lang">ISL</span>
  <div class="clock"><span>6:57 PM</span><span>4/26/2020</span></div>
  <svg class="notif" viewBox="0 0 16 17" width="16" height="17"><path d="M.5.500h15v12H10L8 15.500 6 12.500H.5z" fill="none" stroke="#fff" stroke-width="1.200"/></svg>
  <i class="edge"></i>
</footer>
</body>
</html>
```
FILE: styles.css
```css
* { box-sizing: border-box; }
body { margin: 0; width: 2560px; height: 1440px; overflow: hidden; display: flex; flex-direction: column; background: #f0f0f0; color: #000; font: 12px/16px "Open Sans", "Noto Sans", sans-serif; letter-spacing: -.15px; white-space: nowrap; }
svg { display: block; flex: none; }
i, em { font-style: normal; display: block; flex: none; }
h2, h3, p { margin: 0; }
.defs { position: absolute; }

.titlebar { height: 23px; background: #fff; display: flex; align-items: center; padding-left: 4px; }
.applogo { width: 13px; height: 14px; color: #263b6b; }
.apptitle { margin-left: 6px; letter-spacing: -.13px; }
.wincontrols { margin-left: auto; display: flex; gap: 33px; padding-right: 19px; margin-top: -2px; }
.wincontrols svg { width: 12px; height: 12px; }
.menubar { height: 25px; display: flex; align-items: center; padding-left: 12px; background: linear-gradient(90deg, #f0f0f0, #fafafa); }
.m-file { width: 34px; } .m-edit { width: 36px; } .m-model { width: 50px; } .m-tool { width: 68px; } .m-view { width: 41px; } .m-gadg { width: 59px; }
.mdicontrols { margin-left: auto; display: flex; gap: 7px; padding-right: 7px; margin-top: -2px; }
.mdicontrols svg { width: 9px; height: 10px; }

.workspace { height: 1333px; display: flex; }
.leftdock { width: 249px; display: flex; flex-direction: column; padding-right: 4px; }
.dockhead { height: 25px; flex: none; display: flex; align-items: center; padding-left: 5px; background: linear-gradient(#fbfbfb, #ededed); }
.grip { width: 2px; height: 18px; margin-right: 8px; background: repeating-linear-gradient(#b8b8b8 0 2px, transparent 2px 4px); }
.dockarrow { width: 15px; height: 15px; margin-left: auto; }
.help { font: bold 12px/14px "DejaVu Sans", sans-serif; width: 9px; margin: 0 7px 0 4px; }
.pin { width: 8px; height: 11px; margin: -2px 8px 0 0; }
.toolspanel { height: 73px; flex: none; background: #d8e4f1; border: solid #7c9ac0; border-width: 0 1px 1px 0; padding: 9px 0 0 16px; }
.toolspanel h2 { font-size: 12px; line-height: 16px; letter-spacing: -.3px; }
.toolicons { display: flex; gap: 10px; padding: 8px 0 0 2px; }
.toolicons svg { width: 20px; height: 20px; }
.treepanel { margin-top: 3px; flex: 1; background: #d8e4f1; border: solid #7c9ac0; border-width: 0 1px 1px 0; padding: 4px 5px 0 6px; }
.treehead { height: 30px; display: flex; align-items: center; border-bottom: 1px solid #999; box-shadow: 0 1px #fff; }
.treehead h3 { font: bold 14px/16px "Liberation Sans", sans-serif; letter-spacing: -.1px; margin: 0 auto 0 5px; }
.check { width: 13px; height: 13px; }
.arrowbtn { width: 21px; height: 24px; background: #e2e2e2; border: 1px solid #b2b2b2; display: grid; place-items: center; margin-left: 2px; margin-top: -6px; }
.treepanel .arrowbtn.down { margin-right: -3px; }
.arrowbtn.off { background: #cbcbcb; border-color: #c0c0c0; }
.arrowbtn svg { width: 16px; height: 18px; }
.arrowbtn.down svg { transform: rotate(180deg); }
.treeline { display: flex; align-items: center; height: 18px; }
.stub { width: 11px; border-top: 1px dotted #777; margin-right: 1px; }
.treepanel .treeline { margin-top: 2px; padding-left: 6px; }
.levelicon { width: 14px; height: 14px; margin: 0 3px 0 4px; }
.treeline b { font: bold 14px/16px "Liberation Sans", sans-serif; letter-spacing: -.1px; color: #1a3cc4; }
.docktabs { height: 27px; flex: none; display: grid; }
.docktabs > * { grid-area: 1 / 1; }
.tablabels { display: flex; padding: 4px 0 0 6px; }
.tablabels span:nth-child(1) { width: 56px; } .tablabels span:nth-child(2) { width: 63px; } .tablabels span:nth-child(3) { width: 47px; }

.center { width: 2031px; display: flex; flex-direction: column; }
.toolbar { height: 30px; display: flex; align-items: center; width: 2024px; margin-left: 3px; background: linear-gradient(#fafafa, #eee); border-radius: 3px 0 0 0; }
.viewtabs { display: grid; margin: 5px 0 0 6px; width: 144px; }
.viewtabs > * { grid-area: 1 / 1; }
.viewlabels { display: flex; padding: 3px 0 0 15px; }
.viewlabels span { width: 63px; }
.viewlabels b { letter-spacing: -.2px; }
.sep { width: 1px; height: 18px; background: #b5b5b5; margin: 0 4px 0 3px; }
.sep.s0 { margin: 0 6px 0 38px; }
.layericon { width: 15px; height: 15px; }
.layername { margin-left: 4px; width: 37px; }
.caret { border: 3px solid transparent; border-top: 4px solid #000; border-bottom: 0; margin-left: 2px; }
.viewtools { display: flex; align-items: center; margin-left: 516px; }
.viewtools svg { width: 20px; height: 20px; margin-right: 7px; }
.viewtools svg.active { width: 22px; height: 22px; border: 1px solid #0078d7; background: #cde6f7; margin: 0 6px 0 0; }
.viewport { height: 1303px; width: 2027px; display: grid; background: linear-gradient(#b3b3fa, #e1e1f8); }
.viewport > * { grid-area: 1 / 1; }
.axes { display: flex; gap: 5px; justify-self: end; align-self: start; align-items: center; margin: 6px 9px 0 0; z-index: 1; }
.axes text { font: bold 7px "DejaVu Sans", sans-serif; letter-spacing: 0; }
.axes .big { font-size: 10px; fill: #222; }
.axes svg { overflow: visible; }

.rightdock { width: 280px; display: flex; flex-direction: column; }
.previewpanel { height: 503px; flex: none; background: #d8e4f1; border: solid #7c9ac0; border-width: 0 1px 1px 0; padding: 9px 13px 0 14px; display: flex; flex-direction: column; font: 11px/13px "DejaVu Sans Condensed", "DejaVu Sans", sans-serif; font-stretch: condensed; letter-spacing: -.2px; }
.group { background: #fff; border: 1px solid #a3a3a3; border-radius: 4px; flex: none; }
.heading { height: 38px; display: flex; align-items: center; padding-left: 6px; gap: 13px; }
.heading b { font: bold 12px/16px "Open Sans", sans-serif; letter-spacing: -.2px; margin: 1px 0 0 -1px; }
.material { height: 169px; margin: 9px 0 3px 3px; display: flex; }
.iconcol { width: 45px; display: flex; flex-direction: column; padding: 2px 0 0 5px; }
.w { width: 33px; height: 26px; }
.i1 { margin-bottom: 22px; } .i2 { margin-bottom: 63px; }
.fields { padding-top: 2px; width: 196px; }
.select { width: 192px; height: 21px; background: #e1e1e1; border: 1px solid #adadad; display: flex; align-items: center; justify-content: space-between; padding: 0 4px 0 11px; }
.solid { display: flex; align-items: center; height: 24px; color: #a2a2a2; padding: 5px 0 0 3px; }
.solid .swatch { margin-left: auto; margin-right: 6px; }
.areatitle { display: block; line-height: 18px; height: 17px; letter-spacing: -.15px; }
.swatch { width: 42px; height: 16px; background: #ccc; border: 1px solid #bcbcbc; display: flex; align-items: center; justify-content: space-between; padding: 0 2px 0 4px; }
.swatch.wide { width: 75px; }
.swatch i { width: 22px; height: 8px; background: #efefef; border: 1px solid #aaa; }
.swatch.wide i { width: 55px; }
.swatch em { border: 5px solid transparent; border-top-color: #777; border-bottom: 0; }
.radio { display: flex; align-items: center; height: 18px; }
.radio > i { width: 13px; height: 13px; border: 1px solid #333; border-radius: 50%; margin: 0 3px 0 0; background: #fff; }
.radio > i.on { background: radial-gradient(#222 0 3px, #fff 4px); }
.l1 { width: 82px; } .l2 { width: 81px; }
button { font: inherit; letter-spacing: inherit; color: #000; background: #e1e1e1; border: 1px solid #adadad; padding: 0; height: 21px; display: grid; place-items: center; border-radius: 0; white-space: nowrap; }
.setall { width: 45px; height: 16px; background: #ccc; border-color: #bfbfbf; color: #838383; margin-left: 6px; }
.slider { display: flex; align-items: center; height: 14px; }
.slider::before { content: ""; width: 69px; height: 4px; background: #e7eaea; border: 1px solid #d6d6d6; }
.slider em { width: 6px; height: 14px; background: #ccc; margin-left: -38px; margin-right: 38px; }
.sun { margin-left: -1px; }
.checks { display: flex; align-items: center; margin-top: 10px; height: 16px; gap: 3px; }
.anim { width: 90px; }
.actions { height: 242px; display: grid; grid-template-columns: 38px 192px; grid-template-rows: 21px 20px 18px 20px 21px 21px 21px 21px 28px; row-gap: 5px; align-items: center; padding: 5px 0 0 9px; align-content: start; }
.n { width: 24px; height: 20px; }
.p { width: 32px; height: 21px; }
.actions > button { width: 192px; }
button.focus { border: 2px solid #0078d7; }
button.off { background: #ccc; border-color: #bfbfbf; color: #838383; }
.media { display: flex; justify-content: space-between; width: 189px; height: 19px; align-self: start; }
.media button { width: 33px; height: 19px; place-items: center start; padding-left: 9px; }
.media button svg { width: 16px; height: 12px; fill: #17176d; margin-left: -2px; }
.media button:nth-child(4) svg { margin-left: -5px; }
.speed { display: flex; align-items: center; height: 18px; padding: 0 0 3px 10px; border-bottom: 1px solid #a3a3a3; margin-left: -1px; }
.speed > span:first-child { width: 43px; }
.speed .slider::before { width: 136px; }
.speed .slider em { background: #0078d7; margin: 0 0 0 -7px; }
.split { display: flex; justify-content: space-between; }
.split button { width: 93px; }
.plain { width: 26px; margin-left: 1px; }
.save, .hand { width: 26px; height: 21px; }
.actions p { line-height: 13px; margin-left: -1px; }
.close { width: 73px; align-self: flex-end; margin-top: 5px; flex: none; }
.pathspanel { margin-top: 4px; flex: 1; background: #d8e4f1; border: solid #7c9ac0; border-width: 0 1px 1px 0; padding: 2px 9px 0 10px; }
.pathspanel .treehead { padding: 0 3px 0 3px; }
.pathspanel .treehead h3 { margin-left: 7px; }
.pathspanel .treehead .arrowbtn { margin-top: -2px; height: 26px; }
.paths { margin: 3px 0 0 2px; }
.paths .treeline { font: 13px/14px "Liberation Sans", sans-serif; letter-spacing: 0; background: linear-gradient(#777 50%, transparent 50%) 0 0 / 1px 2px repeat-y; }
.paths .treeline:first-child { background-position: 0 10px; background-repeat: repeat-y; }
.paths .treeline:last-child { background: linear-gradient(#777 0 1px, transparent 1px 2px, #777 2px 3px, transparent 3px 4px, #777 4px 5px, transparent 5px 6px, #777 6px 7px, transparent 7px) 0 0 / 1px 10px no-repeat; }
.paths .box { margin-right: 0; }
.box { width: 13px; height: 13px; background: linear-gradient(135deg, #cfd0d2, #fff); border: 1px solid #8e8f8f; box-shadow: inset 0 0 0 1px #f4f4f4; }
.bit { width: 8px; height: 16px; margin: 0 6px; }
.paths .sel { background: #0078d7; color: #fff; font-size: 13px; }

.statusbar { height: 19px; border-top: 1px solid #d7d7d7; display: flex; align-items: center; padding: 2px 0 0 2px; background: #f0f0f0; }
.statusbar i { width: 1px; height: 15px; background: #d0d0d0; margin-left: auto; margin-right: 364px; }
.taskbar { height: 40px; display: flex; align-items: center; background: linear-gradient(90deg, #464646, #4b4b4b 20%, #444 60%, #4a4a4a 85%, #434343); color: #fff; }
.tb { width: 49px; height: 40px; display: grid; place-items: center; border-bottom: 2px solid transparent; }
.tb.start { width: 48px; }
.start + .tb:not(.start) { margin-left: 2px; }
.tb.open { background: linear-gradient(#a0d1f5, #a0d1f5) center bottom / 40px 2px no-repeat; border-bottom: 0; padding-bottom: 2px; }
.tb.multi { background: linear-gradient(90deg, #a0d1f5 31px, #7c9db8 31px) center bottom / 40px 2px no-repeat; }
.tb.current { width: 48px; background: linear-gradient(#707070, #707070) top / 100% 38px no-repeat, #a0d1f5; margin-right: 1px; }
.vc { color: #1e3f80; }
.tray { margin-left: auto; display: flex; }
.tray svg { width: 16px; margin: 0 8px 0 8.100px; }
.skype { font: bold 11px "Open Sans", sans-serif; fill: #fff; }
.lang { width: 34px; padding-left: 9px; }
.clock { width: 62px; display: flex; flex-direction: column; align-items: center; line-height: 18px; margin: 0 13px 0 2px; letter-spacing: -.2px; }
.edge { width: 1px; height: 40px; background: #8d8d8d; margin: 0 4px 0 20px; }
```
